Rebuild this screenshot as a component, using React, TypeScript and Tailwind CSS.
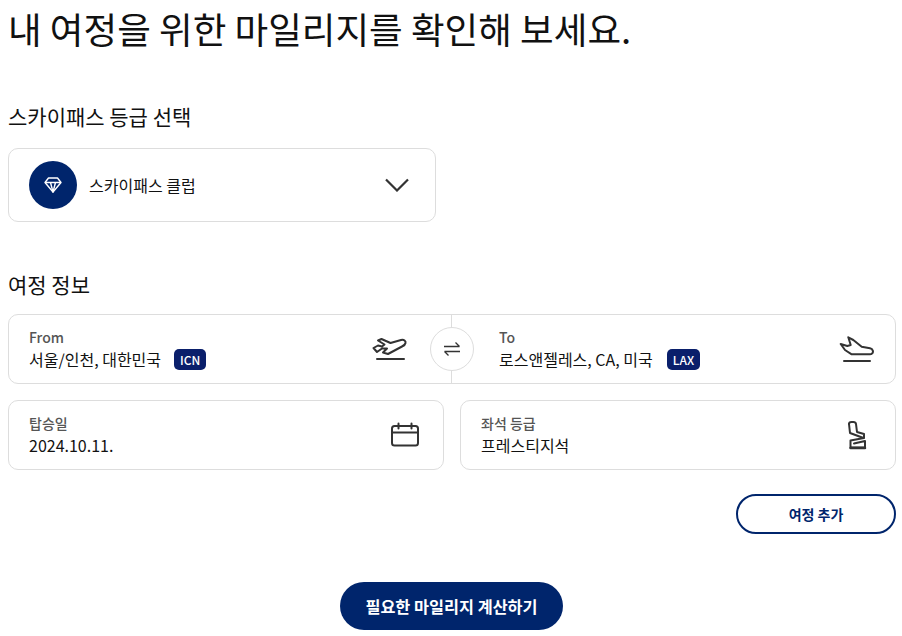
import React from 'react';

function TakeoffIcon() {
  return (
    <svg width="36" height="26" viewBox="0 0 36 26" fill="none" stroke="#333" strokeWidth="2" strokeLinejoin="round" strokeLinecap="round">
      <path d="M1.500 12L6 9.500l4 1 2.500 -2L6 4.500 9.500 3l9 4 10.500 -3c3 -.8 5 1 4.500 3 -.2 1.500 -1.500 2.500 -3.500 3.500L16 18l-5 -1.500 4 -4h-5L5 16z" />
      <path d="M5 23h27" />
    </svg>
  );
}

function LandingIcon() {
  return (
    <svg width="36" height="28" viewBox="0 0 36 28" fill="none" stroke="#333" strokeWidth="2" strokeLinejoin="round" strokeLinecap="round">
      <path d="M10.300 2.300L15.300 5l8.400 6.700 8.300 1.600c3 .6 3.800 3.700 2 5.300 -.5.500 -1 .7 -2 .7H13.700L7 15 2.700 9l6.600 2 3.400 -1z" />
      <path d="M6 26h26" />
    </svg>
  );
}

function CalendarIcon() {
  return (
    <svg width="30" height="26" viewBox="0 0 30 26" fill="none" stroke="#333" strokeWidth="2" strokeLinecap="round" strokeLinejoin="round">
      <rect x="2" y="4" width="26" height="19.500" rx="2.500" />
      <path d="M2 10.500h26M8.500 1.500v5M21.500 1.500v5" />
    </svg>
  );
}

function SeatIcon() {
  return (
    <svg width="20" height="30" viewBox="0 0 20 30" fill="none" stroke="#333" strokeWidth="2" strokeLinejoin="round" strokeLinecap="round">
      <path d="M2 4c0 -1.500 1 -2 2.500 -2h2c1.500 0 2.300 1 2.500 2l1 8 7 2v4L3.500 20.500v7H18V21L7 23.500" />
      <path d="M3.500 28H18" strokeWidth="2.500" />
      <path d="M2 4l1 9 13.500 5" />
    </svg>
  );
}

export default function App() {
  return (
    <div className="h-[636px] w-[902px] overflow-hidden bg-white px-2 font-['Noto_Sans_CJK_KR','Noto_Sans',sans-serif] text-[#111]">
      <h1 className="h-[58px] text-[36.6px] leading-[58px] font-normal">내 여정을 위한 마일리지를 확인해 보세요.</h1>

      <h2 className="mt-[43px] h-[30px] text-[21px] leading-[30px] font-normal">스카이패스 등급 선택</h2>
      <div className="mt-[17px] flex h-[74px] w-[428px] items-center rounded-[10px] border border-[#ddd] pl-5 pr-[26px]">
        <div className="flex h-12 w-12 items-center justify-center rounded-full bg-[#00256c]">
          <svg width="18" height="18" viewBox="0 0 18 18" fill="none" stroke="#fff" strokeWidth="1.400" strokeLinejoin="round">
            <path d="M4.500 2h9l3.500 4.500 -8 9.500 -8 -9.500z" />
            <path d="M1 6.500h16M6.500 6.500l2.500 9.500 2.500 -9.500" />
          </svg>
        </div>
        <span className="ml-3 flex-1 text-[16px]">스카이패스 클럽</span>
        <svg width="24" height="14" viewBox="0 0 24 14" fill="none" stroke="#333" strokeWidth="2.200">
          <path d="M1 1.500l11 11 11 -11" />
        </svg>
      </div>

      <h2 className="mt-[47px] h-[30px] text-[21px] leading-[30px] font-normal">여정 정보</h2>

      <div className="relative mt-[15px] grid h-[70px] w-[888px] grid-cols-2 rounded-[10px] border border-[#ddd]">
        <div className="flex items-center justify-between border-r border-[#ddd] pl-5 pr-[43px]">
          <div>
            <div className="text-[14px] leading-5 font-medium text-[#555]">From</div>
            <div className="flex h-6 items-center text-[16px]">
              서울/인천, 대한민국
              <span className="ml-[13px] rounded-[5px] bg-[#0a1f6b] px-1.5 text-[12px] leading-[21px] font-medium text-white">ICN</span>
            </div>
          </div>
          <TakeoffIcon />
        </div>
        <div className="flex items-center justify-between pl-[47px] pr-[21px]">
          <div>
            <div className="text-[14px] leading-5 font-medium text-[#555]">To</div>
            <div className="flex h-6 items-center text-[16px]">
              로스앤젤레스, CA, 미국
              <span className="ml-[14px] rounded-[5px] bg-[#0a1f6b] px-1.5 text-[12px] leading-[21px] font-medium text-white">LAX</span>
            </div>
          </div>
          <LandingIcon />
        </div>
        <div className="absolute top-[12px] left-[421px] flex h-[44px] w-[44px] items-center justify-center rounded-full border border-[#ddd] bg-white">
          <svg width="18" height="14" viewBox="0 0 18 14" fill="none" stroke="#333" strokeWidth="1.300">
            <path d="M1 4.500h15.500M12.500 .5l4 4M17 9.500H1.500M5.500 13.500l-4 -4" />
          </svg>
        </div>
      </div>

      <div className="mt-4 grid w-[888px] grid-cols-2 gap-4">
        <div className="flex h-[70px] items-center justify-between rounded-[10px] border border-[#ddd] pl-5 pr-[23px]">
          <div>
            <div className="text-[14px] leading-5 font-medium text-[#555]">탑승일</div>
            <div className="h-6 text-[16px] leading-6">2024.10.11.</div>
          </div>
          <CalendarIcon />
        </div>
        <div className="flex h-[70px] items-center justify-between rounded-[10px] border border-[#ddd] pl-5 pr-[28px]">
          <div>
            <div className="text-[14px] leading-5 font-medium text-[#555]">좌석 등급</div>
            <div className="h-6 text-[16px] leading-6">프레스티지석</div>
          </div>
          <SeatIcon />
        </div>
      </div>

      <div className="mt-6 flex w-[888px] justify-end">
        <button type="button" className="h-10 w-40 rounded-full border-2 border-[#00256c] text-[14px] font-bold text-[#00256c]">여정 추가</button>
      </div>

      <div className="mt-12 flex w-[888px] justify-center">
        <button type="button" className="-ml-[1px] h-12 w-[223px] rounded-full bg-[#00256c] text-[16.3px] font-bold text-white">필요한 마일리지 계산하기</button>
      </div>
    </div>
  );
}
